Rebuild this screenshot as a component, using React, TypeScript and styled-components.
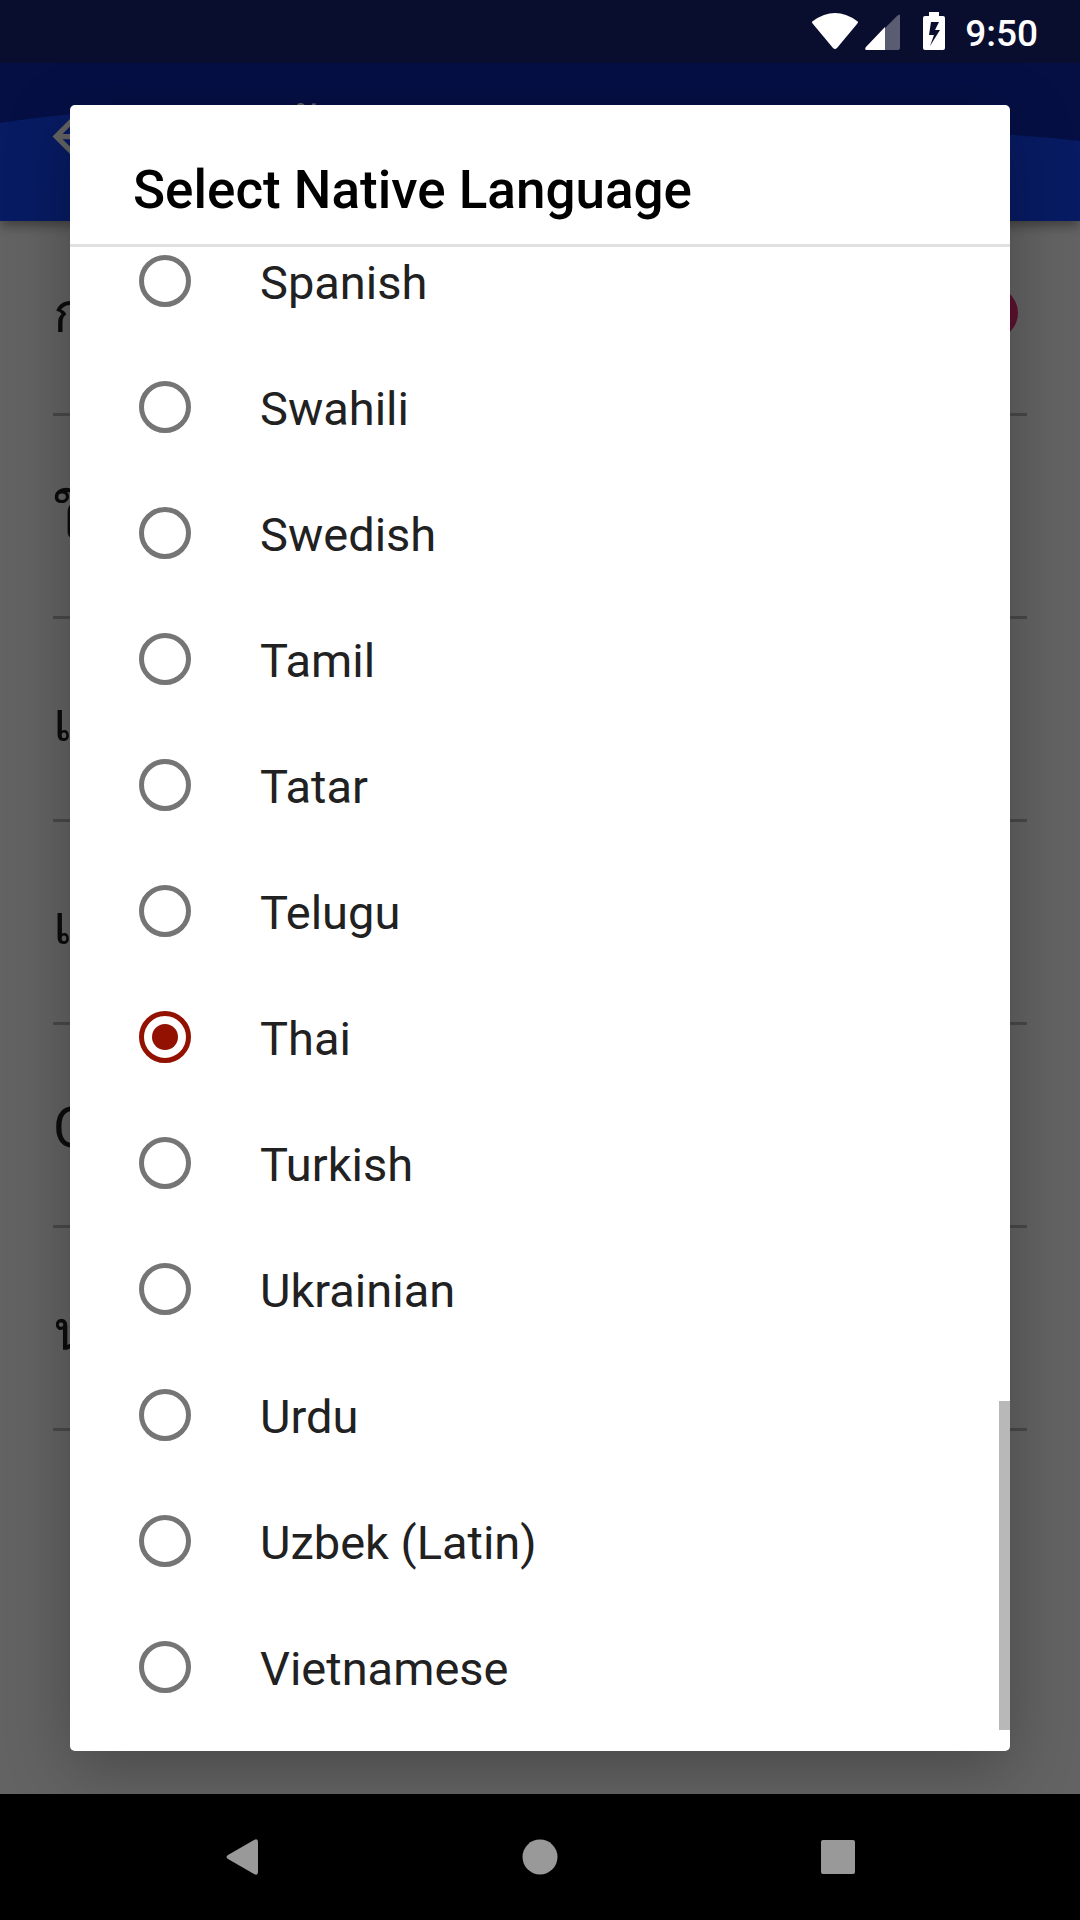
import React, { useState } from "react";
import styled, { createGlobalStyle } from "styled-components";

const GlobalStyle = createGlobalStyle`
  * { box-sizing: border-box; }
  body {
    margin: 0;
    background: #000;
    font-family: Roboto, Loma, Garuda, Waree, "Noto Sans", sans-serif;
  }
`;

const Screen = styled.div`
  display: flex;
  flex-direction: column;
  height: 100vh;
  overflow: hidden;
`;

const StatusBar = styled.header`
  display: flex;
  flex: none;
  align-items: center;
  justify-content: flex-end;
  height: 63px;
  padding-right: 42px;
  background: #0a0e2e;
  color: #fff;
`;

const StatusIcons = styled.svg`
  width: 138px;
  height: 63px;
  margin-right: 20px;
`;

const Clock = styled.time`
  font-size: 37px;
  font-weight: 500;
  line-height: 42px;
  padding-top: 4px;
`;

const Stage = styled.div`
  position: relative;
  flex: 1;
  min-height: 0;
  overflow: hidden;
  background: #fff;
`;

const AppBar = styled.div`
  position: relative;
  height: 158px;
  background: #0d28b0;
  box-shadow: 0 4px 12px rgba(0, 0, 0, 0.4);
`;

const Wave = styled.svg`
  position: absolute;
  inset: 0;
  width: 100%;
  height: 100%;
`;

const AppBarContent = styled.div`
  position: relative;
  display: flex;
  align-items: center;
  gap: 84px;
  height: 147px;
  padding-left: 42px;
  color: #fff;
`;

const AppTitle = styled.span`
  padding-top: 8px;
  font-size: 53px;
  font-weight: 500;
  line-height: 62px;
`;

const BackButton = styled.button`
  display: flex;
  padding: 0;
  border: 0;
  background: none;
  color: inherit;
`;

const Settings = styled.ul`
  margin: 0;
  padding: 0 53px;
  list-style: none;
`;

const Setting = styled.li`
  display: flex;
  align-items: center;
  justify-content: space-between;
  height: 203px;
  padding-top: 6px;
  border-bottom: 3px solid #bdbdbd;
  color: #212121;
  font-size: 56px;
  line-height: 66px;

  &:first-child {
    height: 195px;
    padding: 0 0 8px;
  }
`;

const Knob = styled.span`
  width: 52px;
  height: 52px;
  margin-right: 9px;
  border-radius: 50%;
  background: #f0307a;
`;

const Scrim = styled.div`
  position: absolute;
  inset: 0;
  display: flex;
  padding: 42px 70px 43px;
  background: rgba(0, 0, 0, 0.61);
`;

const Dialog = styled.section`
  display: flex;
  flex: 1;
  flex-direction: column;
  min-width: 0;
  padding-bottom: 21px;
  border-radius: 5px;
  background: #fff;
  box-shadow: 0 16px 64px rgba(0, 0, 0, 0.28);
`;

const DialogTitle = styled.h1`
  flex: none;
  margin: 0;
  padding: 54px 63px 23px;
  border-bottom: 3px solid #e0e0e0;
  color: #000;
  font-size: 53px;
  font-weight: 500;
  line-height: 62px;
`;

const Options = styled.div`
  position: relative;
  display: flex;
  flex: 1;
  flex-direction: column;
  justify-content: flex-end;
  min-height: 0;
  overflow: hidden;
`;

const Option = styled.label`
  display: flex;
  flex: none;
  align-items: center;
  gap: 69px;
  height: 126px;
  padding: 0 69px;
  color: #212121;
  font-size: 47px;
  line-height: 56px;
`;

const OptionText = styled.span`
  padding-top: 4px;
`;

const Radio = styled.input`
  display: grid;
  flex: none;
  place-content: center;
  width: 52px;
  height: 52px;
  margin: 0;
  border: 5px solid #757575;
  border-radius: 50%;
  appearance: none;

  &:checked { border-color: #921100; }
  &:checked::before {
    width: 26px;
    height: 26px;
    border-radius: 50%;
    background: #921100;
    content: "";
  }
`;

const ScrollThumb = styled.div`
  position: absolute;
  right: 0;
  bottom: 0;
  width: 11px;
  height: 22.2%;
  background: #b8b8b8;
`;

const NavBar = styled.nav`
  display: flex;
  flex: none;
  justify-content: center;
  height: 126px;
  background: #000;
`;

const NavButton = styled.button`
  display: flex;
  align-items: center;
  justify-content: center;
  width: 298px;
  padding: 0;
  border: 0;
  background: none;
  color: #999;
`;

const languages = [
  "Spanish",
  "Swahili",
  "Swedish",
  "Tamil",
  "Tatar",
  "Telugu",
  "Thai",
  "Turkish",
  "Ukrainian",
  "Urdu",
  "Uzbek (Latin)",
  "Vietnamese",
];

const settings = ["การ", "ให้", "เสียง", "เวลา", "Open", "นโยบาย"];

export default function App() {
  const [selected, setSelected] = useState("Thai");

  return (
    <Screen>
      <GlobalStyle />
      <StatusBar>
        <StatusIcons viewBox="0 0 138 63" fill="#fff" aria-hidden="true">
          <path d="M6 21Q28 5 50 21Q52 22 50 24L30 48Q28 50 26 48L6 24Q4 22 6 21Z" />
          <path d="M93 16V48Q93 50 91 50H60Q57 50 59 47L90 16Q93 13 93 16Z" opacity="0.33" />
          <path d="M78 27V50H60Q57 50 59 47Z" />
          <path
            fillRule="evenodd"
            d="M122 12H132V16H136Q138 16 138 18V48Q138 50 136 50H118Q116 50 116 48V18Q116 16 118 16H122ZM124 22L122 35H127L123 46L133 30H128L132 22Z"
          />
        </StatusIcons>
        <Clock>9:50</Clock>
      </StatusBar>

      <Stage>
        <AppBar>
          <Wave viewBox="0 0 1080 158" preserveAspectRatio="none" aria-hidden="true">
            <path d="M0 60Q180 32 400 60T850 70Q980 66 1080 78V158H0Z" fill="#1446ff" />
          </Wave>
          <AppBarContent>
            <BackButton aria-label="Back">
              <svg width="63" height="63" viewBox="0 0 24 24" fill="currentColor">
                <path d="M20 11H7.83l5.59-5.59L12 4l-8 8 8 8 1.41-1.41L7.83 13H20v-2z" />
              </svg>
            </BackButton>
            <AppTitle>การตั้งค่า</AppTitle>
          </AppBarContent>
        </AppBar>
        <Settings>
          {settings.map((name, index) => (
            <Setting key={name}>
              <span>{name}</span>
              {index === 0 && <Knob />}
            </Setting>
          ))}
        </Settings>

        <Scrim>
          <Dialog role="dialog" aria-labelledby="dialog-title">
            <DialogTitle id="dialog-title">Select Native Language</DialogTitle>
            <Options role="radiogroup" aria-labelledby="dialog-title">
              {languages.map((language) => (
                <Option key={language}>
                  <Radio
                    type="radio"
                    name="language"
                    value={language}
                    checked={selected === language}
                    onChange={() => setSelected(language)}
                  />
                  <OptionText>{language}</OptionText>
                </Option>
              ))}
              <ScrollThumb />
            </Options>
          </Dialog>
        </Scrim>
      </Stage>

      <NavBar>
        <NavButton aria-label="Back">
          <svg width="32" height="36" viewBox="0 0 32 36" fill="currentColor">
            <path d="M28 1Q32-1 32 3V33Q32 37 28 35L2 20Q-1 18 2 16Z" />
          </svg>
        </NavButton>
        <NavButton aria-label="Home">
          <svg width="36" height="36" viewBox="0 0 36 36" fill="currentColor">
            <circle cx="18" cy="18" r="17.5" />
          </svg>
        </NavButton>
        <NavButton aria-label="Overview">
          <svg width="34" height="34" viewBox="0 0 34 34" fill="currentColor">
            <rect width="34" height="34" rx="2" />
          </svg>
        </NavButton>
      </NavBar>
    </Screen>
  );
}
